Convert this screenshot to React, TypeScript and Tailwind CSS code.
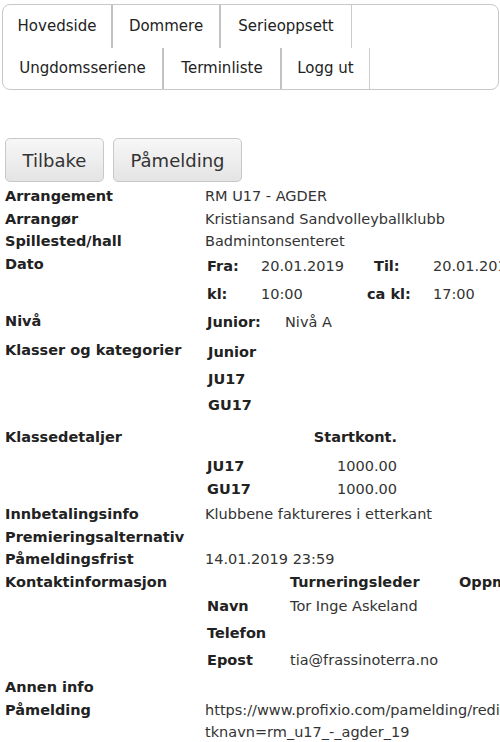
import React from 'react';

const font = { fontFamily: '"DejaVu Sans", Verdana, sans-serif' };

function Row({ label, children, className = '' }: { label: string; children?: React.ReactNode; className?: string }) {
  return (
    <div className={`flex ${className}`}>
      <div className="w-[205px] shrink-0 pl-[5px] font-bold leading-[22.5px] whitespace-nowrap text-[#222]">{label}</div>
      <div className="flex-1">{children}</div>
    </div>
  );
}

export default function App() {
  const menuTop = [
    { label: 'Hovedside', w: 'w-[110px]', last: false },
    { label: 'Dommere', w: 'w-[108px]', last: false },
    { label: 'Serieoppsett', w: 'w-[131px]', last: true },
  ];
  const menuBottom = [
    { label: 'Ungdomsseriene', w: 'w-[161px]', last: false },
    { label: 'Terminliste', w: 'w-[118px]', last: false },
    { label: 'Logg ut', w: 'w-[88px]', last: true },
  ];

  return (
    <div style={font} className="h-[742px] w-[500px] overflow-hidden bg-white text-[14.5px] text-[#333]">
      {/* Menu */}
      <div className="ml-[2px] mt-[4px] w-[497px] rounded-[8px] border border-[#c8c8c8] text-[15px] text-[#222]">
        <div className="flex h-[43px]">
          {menuTop.map((m) => (
            <div
              key={m.label}
              className={`flex items-center justify-center ${m.w} ${m.last ? 'border-r border-[#cccccc]' : 'border-r-2 border-[#c2c2c2]'}`}
            >
              {m.label}
            </div>
          ))}
        </div>
        <div className="flex h-[41px]">
          {menuBottom.map((m) => (
            <div
              key={m.label}
              className={`flex items-center justify-center ${m.w} ${m.last ? 'border-r border-[#cccccc]' : 'border-r-2 border-[#c2c2c2]'}`}
            >
              {m.label}
            </div>
          ))}
        </div>
      </div>

      {/* Buttons */}
      <div className="ml-[5px] mt-[48px] flex gap-[9px]">
        {[
          { label: 'Tilbake', w: 'w-[99px]' },
          { label: 'Påmelding', w: 'w-[129px]' },
        ].map((b) => (
          <button
            key={b.label}
            type="button"
            className={`flex h-[44px] ${b.w} items-center justify-center rounded-[5px] border border-[#c8c8c8] bg-gradient-to-b from-[#f7f7f7] to-[#e4e4e4] text-[18px] text-[#333]`}
          >
            {b.label}
          </button>
        ))}
      </div>

      {/* Details */}
      <div className="mt-[3px] flex flex-col">
        <Row label="Arrangement">
          <div className="leading-[22.5px]">RM U17 - AGDER</div>
        </Row>
        <Row label="Arrangør">
          <div className="leading-[22.5px] whitespace-nowrap">Kristiansand Sandvolleyballklubb</div>
        </Row>
        <Row label="Spillested/hall">
          <div className="leading-[22.5px]">Badmintonsenteret</div>
        </Row>
        <Row label="Dato" className="h-[57.5px]">
          <div className="grid grid-cols-[54px_106px_66px_100px] whitespace-nowrap pl-[2px]">
            <div className="flex h-[28px] items-center font-bold text-[#222]">Fra:</div>
            <div className="flex h-[28px] items-center">20.01.2019</div>
            <div className="flex h-[28px] items-center pl-[7px] font-bold text-[#222]">Til:</div>
            <div className="flex h-[28px] items-center">20.01.2019</div>
            <div className="flex h-[28px] items-center font-bold text-[#222]">kl:</div>
            <div className="flex h-[28px] items-center">10:00</div>
            <div className="flex h-[28px] items-center font-bold text-[#222]">ca kl:</div>
            <div className="flex h-[28px] items-center">17:00</div>
          </div>
        </Row>
        <Row label="Nivå" className="h-[29px]">
          <div className="flex pl-[2px] pt-[1px] leading-[22px]">
            <div className="w-[78px] font-bold text-[#222]">Junior:</div>
            <div>Nivå A</div>
          </div>
        </Row>
        <Row label="Klasser og kategorier" className="h-[87px]">
          <div className="flex flex-col gap-[4.5px] pl-[3px] pt-[2px] font-bold leading-[22px] text-[#222]">
            <div>Junior</div>
            <div>JU17</div>
            <div>GU17</div>
          </div>
        </Row>
        <Row label="Klassedetaljer" className="h-[77px]">
          <div className="grid grid-cols-[83px_107px] pl-[2px] leading-[22px]">
            <div className="h-[29px]" />
            <div className="h-[29px] text-right font-bold text-[#222]">Startkont.</div>
            <div className="h-[23px] font-bold text-[#222]">JU17</div>
            <div className="h-[23px] text-right">1000.00</div>
            <div className="h-[23px] font-bold text-[#222]">GU17</div>
            <div className="h-[23px] text-right">1000.00</div>
          </div>
        </Row>
        <Row label="Innbetalingsinfo">
          <div className="leading-[22.5px] whitespace-nowrap">Klubbene faktureres i etterkant</div>
        </Row>
        <Row label="Premieringsalternativ" />
        <Row label="Påmeldingsfrist">
          <div className="leading-[22.5px]">14.01.2019 23:59</div>
        </Row>
        <Row label="Kontaktinformasjon" className="h-[105.5px]">
          <div className="grid grid-cols-[83px_169px_120px] whitespace-nowrap pl-[2px] leading-[22px]">
            <div className="h-[24px]" />
            <div className="h-[24px] font-bold text-[#222]">Turneringsleder</div>
            <div className="h-[24px] font-bold text-[#222]">Oppmann</div>
            <div className="h-[27px] font-bold text-[#222]">Navn</div>
            <div className="h-[27px]">Tor Inge Askeland</div>
            <div className="h-[27px]" />
            <div className="h-[27px] font-bold text-[#222]">Telefon</div>
            <div className="h-[27px]" />
            <div className="h-[27px]" />
            <div className="h-[27px] font-bold text-[#222]">Epost</div>
            <div className="h-[27px]">tia@frassinoterra.no</div>
            <div className="h-[27px]" />
          </div>
        </Row>
        <Row label="Annen info" />
        <Row label="Påmelding">
          <div className="leading-[22px] whitespace-nowrap">
            <div>https://www.profixio.com/pamelding/redirect.php?</div>
            <div>tknavn=rm_u17_-_agder_19</div>
          </div>
        </Row>
      </div>
    </div>
  );
}
